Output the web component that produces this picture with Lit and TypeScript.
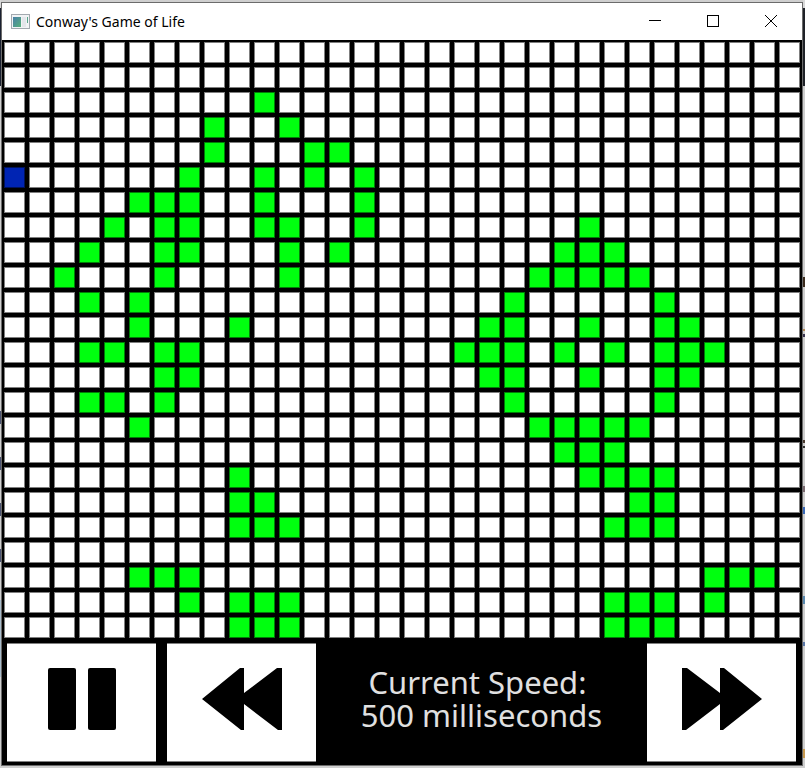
import { LitElement, html, css } from "lit";
import { customElement, state } from "lit/decorators.js";

const COLUMNS = 32;
const ROWS = 24;

// Columns of the living cells, row by row.
const LIVING: number[][] = [
  [],
  [],
  [10],
  [8, 11],
  [8, 12, 13],
  [7, 10, 12, 14],
  [5, 6, 7, 10, 14],
  [4, 6, 7, 10, 11, 14, 23],
  [3, 6, 7, 11, 13, 22, 23, 24],
  [2, 6, 11, 21, 22, 23, 24, 25],
  [3, 5, 20, 26],
  [5, 9, 19, 20, 23, 26, 27],
  [3, 4, 6, 7, 18, 19, 20, 22, 24, 26, 27, 28],
  [6, 7, 19, 20, 23, 26, 27],
  [3, 4, 6, 20, 26],
  [5, 21, 22, 23, 24, 25],
  [22, 23, 24],
  [9, 23, 24, 25, 26],
  [9, 10, 25, 26],
  [9, 10, 11, 24, 25, 26],
  [],
  [5, 6, 7, 28, 29, 30],
  [7, 9, 10, 11, 24, 25, 26, 28],
  [9, 10, 11, 24, 25, 26],
];

@customElement("life-board")
export class LifeBoard extends LitElement {
  static styles = css`
    :host {
      display: block;
      padding: 2px;
      background: #000;
    }
    .board {
      display: grid;
      grid-template-columns: repeat(32, minmax(0, 1fr));
      gap: 4px;
    }
    .cell {
      box-sizing: border-box;
      aspect-ratio: 1;
      border: 1px solid #7f7f7f;
      background: #fff;
    }
    .alive {
      border-color: #007f07;
      background: #00ff0f;
    }
    .cursor {
      border-color: #001259;
      background: #0024b3;
    }
  `;

  @state() private cursor = { row: 5, column: 0 };

  private cellClass(row: number, column: number) {
    if (row === this.cursor.row && column === this.cursor.column) return "cell cursor";
    return LIVING[row].includes(column) ? "cell alive" : "cell";
  }

  render() {
    return html`<div class="board">
      ${Array.from(
        { length: ROWS * COLUMNS },
        (_, i) => html`<div class=${this.cellClass(Math.floor(i / COLUMNS), i % COLUMNS)}></div>`
      )}
    </div>`;
  }
}

@customElement("app-root")
export class AppRoot extends LitElement {
  static styles = css`
    :host {
      display: block;
      box-sizing: border-box;
      min-height: 100vh;
      padding: 2px 2px 2px 1px;
      /* The desktop behind the window: slivers of other windows on both sides. */
      background:
        linear-gradient(
            #d8d8d8 8px, #1a2030 8px 86px, #cfcfcf 86px 411px,
            #4a5270 411px 424px, #cfcfcf 424px 457px, #4a5270 457px 470px,
            #cfcfcf 470px 503px, #4a5270 503px 516px, #cfcfcf 516px 549px,
            #4a5270 549px 562px, #cfcfcf 562px 600px, #a9bccb 600px 677px,
            #cfcfcf 677px
          )
          left top / 1px 100% no-repeat,
        linear-gradient(
            #d8d8d8 8px, #1f2228 8px 86px, #cfcfcf 86px 277px,
            #3a2a1c 277px 287px, #cfcfcf 287px 329px, #b58a5a 329px 331px,
            #cfcfcf 331px 334px, #3a3550 334px 337px, #cfcfcf 337px 440px,
            #4a3a30 440px 443px, #cfcfcf 443px 446px, #303030 446px 448px,
            #cfcfcf 448px 486px, #7a6a70 486px 492px, #cfcfcf 492px 507px,
            #3a6ab8 507px 514px, #cfcfcf 514px 596px, #5a8ab0 596px 604px,
            #cfcfcf 604px 642px, #5a78a8 642px 646px, #cfcfcf 646px 749px,
            #c89a50 749px 758px, #cfcfcf 758px
          )
          right top / 2px 100% no-repeat,
        #cfcfcf;
    }
    .window {
      border: 1px solid #6b6b6b;
      background: #000;
    }
    .titlebar {
      display: flex;
      align-items: center;
      height: 37px;
      padding: 0 2px 0 9px;
      background: #fff;
      color: #000;
    }
    .title {
      flex: 1;
      margin: 0 0 0 6px;
      font: 400 14px/20px "Noto Sans", sans-serif;
    }
    button {
      display: flex;
      align-items: center;
      justify-content: center;
      margin: 0;
      padding: 0;
      border: 0;
      border-radius: 0;
      background: #fff;
      color: #000;
    }
    .caption {
      width: 58px;
      height: 37px;
      padding-bottom: 2px;
    }
    svg {
      display: block;
    }
    .controls {
      display: grid;
      grid-template-columns: 149fr 149fr 309fr 149fr;
      column-gap: 11px;
      padding: 3px 6px 3px 5px;
    }
    .control {
      box-sizing: border-box;
      height: 119px;
      padding-bottom: 8px;
      border: 1px solid #7f7f7f;
      border-width: 1px 0;
    }
    .speed {
      align-self: center;
      margin: 0;
      padding-bottom: 8px;
      text-align: center;
      color: #e0e0e0;
      font: 400 31px/33px "Noto Sans", sans-serif;
    }
  `;

  @state() private speed = 500;

  render() {
    return html`
      <main class="window">
        <header class="titlebar">
          <svg width="19" height="16" viewBox="0 0 19 16" aria-hidden="true">
            <defs>
              <linearGradient id="pane" x1="0" y1="0" x2="1" y2="1">
                <stop offset="0" stop-color="#4a7fa8" />
                <stop offset="1" stop-color="#55b07a" />
              </linearGradient>
            </defs>
            <rect x="0.5" y="0.5" width="18" height="14" fill="#f1f3f5" stroke="#a3a9af" />
            <rect x="2" y="3" width="8" height="10" fill="url(#pane)" />
            <rect x="11" y="3" width="4" height="10" fill="#e3e6ea" />
            <rect x="16" y="3" width="1" height="6" fill="#59a58c" />
          </svg>
          <h1 class="title">Conway's Game of Life</h1>
          <button class="caption" aria-label="Minimize">
            <svg width="12" height="12"><path d="M0 5.5H12" stroke="currentColor" /></svg>
          </button>
          <button class="caption" aria-label="Maximize">
            <svg width="12" height="12">
              <rect x="0.5" y="0.5" width="11" height="11" fill="none" stroke="currentColor" />
            </svg>
          </button>
          <button class="caption" aria-label="Close">
            <svg width="12" height="12"><path d="M0 0L12 12M12 0L0 12" stroke="currentColor" /></svg>
          </button>
        </header>
        <life-board></life-board>
        <section class="controls">
          <button class="control" aria-label="Pause">
            <svg width="70" height="64" viewBox="0 0 70 64" fill="currentColor">
              <rect x="1" y="1" width="28" height="62" rx="2" />
              <rect x="41" y="1" width="28" height="62" rx="2" />
            </svg>
          </button>
          <button class="control" aria-label="Slower" @click=${() => (this.speed += 100)}>
            <svg width="80" height="64" viewBox="0 0 80 64" fill="currentColor">
              <path d="M0 32L38 1H42V26L75 1H80V63H76L42 37V63H39Z" />
            </svg>
          </button>
          <p class="speed">Current Speed:&nbsp;<br />${this.speed} milliseconds</p>
          <button
            class="control"
            aria-label="Faster"
            @click=${() => (this.speed = Math.max(100, this.speed - 100))}
          >
            <svg width="80" height="64" viewBox="0 0 80 64" fill="currentColor">
              <path d="M80 32L42 1H38V26L5 1H0V63H4L38 37V63H41Z" />
            </svg>
          </button>
        </section>
      </main>
    `;
  }
}
